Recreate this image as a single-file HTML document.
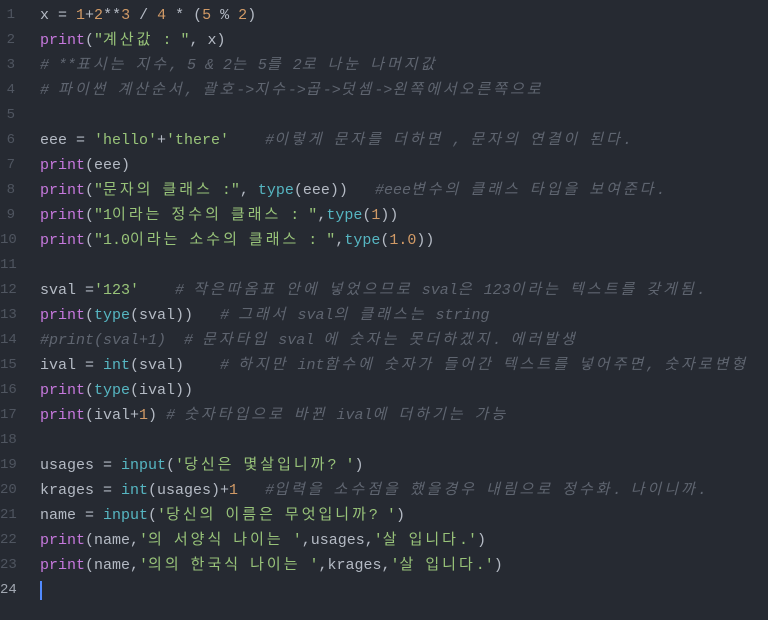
<!DOCTYPE html>
<html><head><meta charset="utf-8"><style>
html,body{margin:0;padding:0;background:#262a32;width:768px;height:620px;overflow:hidden}
.ed{position:absolute;left:0;top:3px;font-family:"Liberation Mono","Noto Sans CJK KR",monospace;font-size:15px;line-height:25px;color:#b4bac4}
.l{height:25px;white-space:pre;position:relative}
.n{position:absolute;left:0;width:15px;text-align:right;color:#4f5560;font-size:14px}
.c{position:absolute;left:40px}
.k{color:#c678dd}.s{color:#98c379}.o{color:#d19a66}.b{color:#56b6c2}.m{color:#5f6570;font-style:italic}
u{text-decoration:none;letter-spacing:3px}
.cur{position:absolute;left:40px;top:3px;width:2px;height:19px;background:#528bff}
</style></head><body><div class="ed">
<div class="l"><span class="n">1</span><span class="c">x = <span class="o">1</span>+<span class="o">2</span>**<span class="o">3</span> / <span class="o">4</span> * (<span class="o">5</span> % <span class="o">2</span>)</span></div>
<div class="l"><span class="n">2</span><span class="c"><span class="k">print</span>(<span class="s">"<u>계산값</u> : "</span>, x)</span></div>
<div class="l"><span class="n">3</span><span class="c m"># **<u>표시는</u> <u>지수</u>, 5 &amp; 2<u>는</u> 5<u>를</u> 2<u>로</u> <u>나눈</u> <u>나머지값</u></span></div>
<div class="l"><span class="n">4</span><span class="c m"># <u>파이썬</u> <u>계산순서</u>, <u>괄호</u>-&gt;<u>지수</u>-&gt;<u>곱</u>-&gt;<u>덧셈</u>-&gt;<u>왼쪽에서오른쪽으로</u></span></div>
<div class="l"><span class="n">5</span></div>
<div class="l"><span class="n">6</span><span class="c">eee = <span class="s">'hello'</span>+<span class="s">'there'</span>    <span class="m">#<u>이렇게</u> <u>문자를</u> <u>더하면</u> , <u>문자의</u> <u>연결이</u> <u>된다</u>.</span></span></div>
<div class="l"><span class="n">7</span><span class="c"><span class="k">print</span>(eee)</span></div>
<div class="l"><span class="n">8</span><span class="c"><span class="k">print</span>(<span class="s">"<u>문자의</u> <u>클래스</u> :"</span>, <span class="b">type</span>(eee))   <span class="m">#eee<u>변수의</u> <u>클래스</u> <u>타입을</u> <u>보여준다</u>.</span></span></div>
<div class="l"><span class="n">9</span><span class="c"><span class="k">print</span>(<span class="s">"1<u>이라는</u> <u>정수의</u> <u>클래스</u> : "</span>,<span class="b">type</span>(<span class="o">1</span>))</span></div>
<div class="l"><span class="n">10</span><span class="c"><span class="k">print</span>(<span class="s">"1.0<u>이라는</u> <u>소수의</u> <u>클래스</u> : "</span>,<span class="b">type</span>(<span class="o">1.0</span>))</span></div>
<div class="l"><span class="n">11</span></div>
<div class="l"><span class="n">12</span><span class="c">sval =<span class="s">'123'</span>    <span class="m"># <u>작은따옴표</u> <u>안에</u> <u>넣었으므로</u> sval<u>은</u> 123<u>이라는</u> <u>텍스트를</u> <u>갖게됨</u>.</span></span></div>
<div class="l"><span class="n">13</span><span class="c"><span class="k">print</span>(<span class="b">type</span>(sval))   <span class="m"># <u>그래서</u> sval<u>의</u> <u>클래스는</u> string</span></span></div>
<div class="l"><span class="n">14</span><span class="c m">#print(sval+1)  # <u>문자타입</u> sval <u>에</u> <u>숫자는</u> <u>못더하겠지</u>. <u>에러발생</u></span></div>
<div class="l"><span class="n">15</span><span class="c">ival = <span class="b">int</span>(sval)    <span class="m"># <u>하지만</u> int<u>함수에</u> <u>숫자가</u> <u>들어간</u> <u>텍스트를</u> <u>넣어주면</u>, <u>숫자로변형</u></span></span></div>
<div class="l"><span class="n">16</span><span class="c"><span class="k">print</span>(<span class="b">type</span>(ival))</span></div>
<div class="l"><span class="n">17</span><span class="c"><span class="k">print</span>(ival+<span class="o">1</span>) <span class="m"># <u>숫자타입으로</u> <u>바뀐</u> ival<u>에</u> <u>더하기는</u> <u>가능</u></span></span></div>
<div class="l"><span class="n">18</span></div>
<div class="l"><span class="n">19</span><span class="c">usages = <span class="b">input</span>(<span class="s">'<u>당신은</u> <u>몇살입니까</u>? '</span>)</span></div>
<div class="l"><span class="n">20</span><span class="c">krages = <span class="b">int</span>(usages)+<span class="o">1</span>   <span class="m">#<u>입력을</u> <u>소수점을</u> <u>했을경우</u> <u>내림으로</u> <u>정수화</u>. <u>나이니까</u>.</span></span></div>
<div class="l"><span class="n">21</span><span class="c">name = <span class="b">input</span>(<span class="s">'<u>당신의</u> <u>이름은</u> <u>무엇입니까</u>? '</span>)</span></div>
<div class="l"><span class="n">22</span><span class="c"><span class="k">print</span>(name,<span class="s">'<u>의</u> <u>서양식</u> <u>나이는</u> '</span>,usages,<span class="s">'<u>살</u> <u>입니다</u>.'</span>)</span></div>
<div class="l"><span class="n">23</span><span class="c"><span class="k">print</span>(name,<span class="s">'<u>의의</u> <u>한국식</u> <u>나이는</u> '</span>,krages,<span class="s">'<u>살</u> <u>입니다</u>.'</span>)</span></div>
<div class="l"><span class="n" style="color:#a0a6b0">24</span><span class="cur"></span></div>
</div></body></html>
